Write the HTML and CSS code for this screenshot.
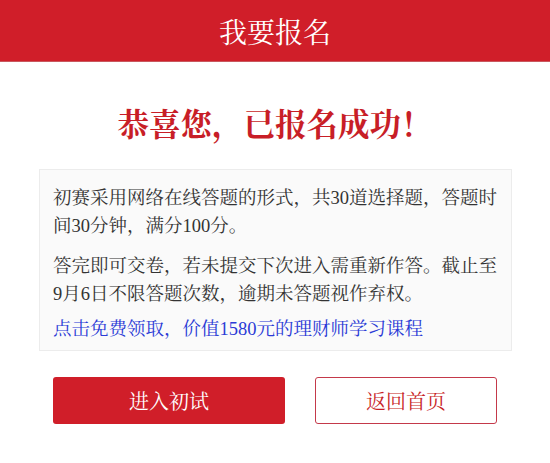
FILE: index.html
```html
<!DOCTYPE html>
<html lang="zh-CN">
<head>
<meta charset="utf-8">
<title>我要报名</title>
<link rel="stylesheet" href="styles.css">
</head>
<body>
<div class="dialog">
  <header class="bar">我要报名</header>
  <h1 class="title">恭喜您，已报名成功！</h1>
  <div class="info">
    <p class="para">初赛采用网络在线答题的形式，共30道选择题，答题时间30分钟，满分100分。</p>
    <p class="para second">答完即可交卷，若未提交下次进入需重新作答。截止至<span class="keep">9月6日</span>不限答题次数，逾期未答题视作弃权。</p>
    <a class="link" href="#">点击免费领取，价值1580元的理财师学习课程</a>
  </div>
  <div class="actions">
    <a class="btn primary" href="#">进入初试</a>
    <a class="btn outline" href="#">返回首页</a>
  </div>
</div>
</body>
</html>
```

FILE: styles.css
```css
html, body {
  margin: 0;
  padding: 0;
  background: #fff;
}
body {
  font-family: "Liberation Serif", "Noto Serif CJK SC", "Noto Sans CJK SC", serif;
  width: 550px;
  height: 463px;
  overflow: hidden;
}
.dialog {
  width: 550px;
}
.bar {
  height: 62px;
  background: #d01e29;
  color: #fff;
  font-size: 28px;
  display: flex;
  align-items: center;
  justify-content: center;
  border-bottom: 1px solid #c9585e;
  box-sizing: border-box;
}
.title {
  margin: 44px 0 0;
  height: 40px;
  line-height: 40px;
  text-align: center;
  color: #c81e27;
  font-size: 31.5px;
  font-weight: bold;
}
.info {
  margin: 23px 38px 0 39px;
  background: #fafafa;
  border: 1px solid #ececec;
  padding: 14px 8px 7px 13px;
  color: #333;
  font-size: 18.5px;
  line-height: 28px;
}
.para {
  margin: 0;
}
.second {
  margin-top: 12px;
}
.keep {
  white-space: nowrap;
}
.link {
  display: block;
  margin-top: 7px;
  color: #2b3ad6;
  text-decoration: none;
}
.actions {
  display: flex;
  gap: 30px;
  padding: 26px 0 0 53px;
}
.btn {
  height: 47px;
  box-sizing: border-box;
  border-radius: 3px;
  display: flex;
  align-items: center;
  justify-content: center;
  font-size: 20px;
  text-decoration: none;
}
.primary {
  width: 232px;
  background: #d01e29;
  color: #fff;
}
.outline {
  width: 182px;
  border: 1px solid #c4394a;
  color: #c81e27;
  background: #fff;
}
```
